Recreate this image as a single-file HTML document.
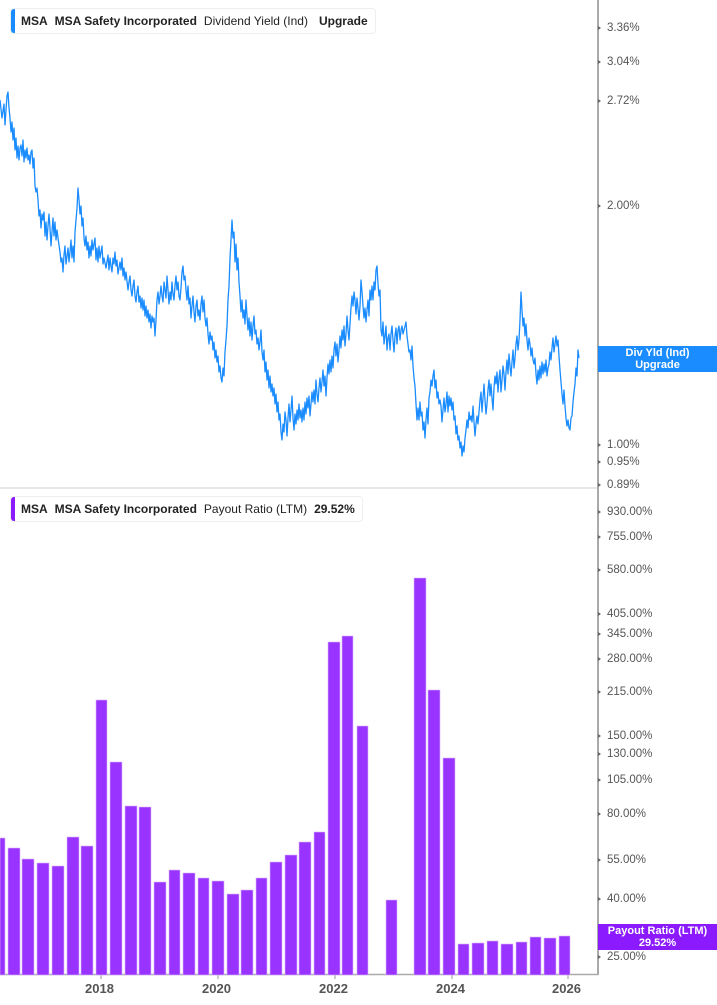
<!DOCTYPE html>
<html><head><meta charset="utf-8"><style>
html,body{margin:0;padding:0;background:#fff;}
body{width:717px;height:1005px;position:relative;overflow:hidden;font-family:"Liberation Sans",sans-serif;}
.leg{position:absolute;left:10px;height:24px;border:1px solid #eee;border-radius:4px;background:#fff;font-size:12px;color:#222;line-height:24px;white-space:nowrap;padding-left:10px;padding-right:7px;}
.leg:before{content:"";position:absolute;left:0;top:0;width:4px;height:24px;border-radius:3px 0 0 3px;background:var(--c);}
.leg b{font-weight:bold;margin-right:7px;}
.leg span{margin-right:7px;}
.ax{position:absolute;left:607px;font-size:11.5px;color:#555;line-height:12px;}
.ax:before{content:"";position:absolute;left:-9px;top:4px;border-left:3px solid #666;border-top:2px solid transparent;border-bottom:2px solid transparent;}
.tag{position:absolute;left:598px;width:119px;color:#fff;font-size:11px;font-weight:bold;text-align:center;line-height:12px;padding:1px 0;}
.yr{position:absolute;top:981px;font-size:13px;font-weight:bold;color:#555;}
</style></head><body>
<svg width="717" height="1005" style="position:absolute;left:0;top:0">
<line x1="0" y1="488" x2="598" y2="488" stroke="#ddd" stroke-width="1.5"/>
<line x1="598" y1="0" x2="598" y2="975" stroke="#aaa" stroke-width="2"/>
<line x1="0" y1="974.5" x2="598" y2="974.5" stroke="#aaa" stroke-width="1.5"/>
<g stroke="#999" stroke-width="1"><line x1="101" y1="975" x2="101" y2="979"/><line x1="218" y1="975" x2="218" y2="979"/><line x1="335" y1="975" x2="335" y2="979"/><line x1="452" y1="975" x2="452" y2="979"/><line x1="568" y1="975" x2="568" y2="979"/></g>
<g fill="#9933ff" stroke="#d9b3ff" stroke-width="0.6">
<rect x="0" y="838" width="5" height="137"/>
<rect x="8" y="848" width="12" height="127"/>
<rect x="22" y="859" width="12" height="116"/>
<rect x="37" y="863" width="12" height="112"/>
<rect x="52" y="866" width="12" height="109"/>
<rect x="67" y="837" width="12" height="138"/>
<rect x="81" y="846" width="12" height="129"/>
<rect x="96" y="700" width="11" height="275"/>
<rect x="110" y="762" width="12" height="213"/>
<rect x="125" y="806" width="12" height="169"/>
<rect x="139" y="807" width="12" height="168"/>
<rect x="154" y="882" width="12" height="93"/>
<rect x="169" y="870" width="11" height="105"/>
<rect x="183" y="873" width="12" height="102"/>
<rect x="198" y="878" width="11" height="97"/>
<rect x="212" y="881" width="12" height="94"/>
<rect x="227" y="894" width="12" height="81"/>
<rect x="241" y="890" width="12" height="85"/>
<rect x="256" y="878" width="11" height="97"/>
<rect x="270" y="862" width="12" height="113"/>
<rect x="285" y="855" width="12" height="120"/>
<rect x="299" y="842" width="12" height="133"/>
<rect x="314" y="832" width="11" height="143"/>
<rect x="328" y="642" width="12" height="333"/>
<rect x="342" y="636" width="11" height="339"/>
<rect x="357" y="726" width="11" height="249"/>
<rect x="386" y="900" width="11" height="75"/>
<rect x="414" y="578" width="12" height="397"/>
<rect x="428" y="690" width="12" height="285"/>
<rect x="443" y="758" width="12" height="217"/>
<rect x="458" y="944" width="11" height="31"/>
<rect x="472" y="943" width="12" height="32"/>
<rect x="487" y="941" width="11" height="34"/>
<rect x="501" y="944" width="12" height="31"/>
<rect x="516" y="942" width="11" height="33"/>
<rect x="530" y="937" width="11" height="38"/>
<rect x="544" y="938" width="12" height="37"/>
<rect x="559" y="936" width="11" height="39"/>
</g>
<polyline fill="none" stroke="#1a8cff" stroke-width="1.3" stroke-linejoin="round" points="
0,100 2,118 4,104 5,125 6,110 7,96 8,92 9,108 10,118 11,132 12,122 13,140 14,128 15,150 16,138 17,158 18,146 19,160 20,148 21,145 22,156 23,140 24,162 25,150 26,158 27,148 28,160 29,155 30,164 31,152 32,150 33,168 34,158 35,186 36,192 37,188 38,200 39,216 40,210 41,228 42,214 43,220 44,212 45,236 46,222 47,240 48,226 49,214 50,228 51,246 52,232 53,218 54,236 55,222 56,240 57,230 58,238 60,252 61,262 62,258 63,272 64,255 65,246 66,264 67,256 68,248 69,262 70,252 71,240 72,258 73,246 74,262 75,232 76,220 77,208 78,188 79,200 80,214 81,206 82,226 83,218 84,238 85,246 86,236 87,250 88,242 89,258 90,246 91,256 92,240 93,250 94,244 95,238 96,260 97,248 98,262 99,246 100,258 102,246 103,264 104,258 106,268 108,255 109,270 110,258 111,266 112,272 113,258 114,264 115,252 116,266 117,260 118,274 120,262 121,270 122,258 123,276 124,268 125,280 126,272 128,290 129,282 130,276 131,290 132,296 133,286 134,280 135,296 136,302 137,292 138,286 139,302 140,296 141,308 142,298 143,310 144,300 145,316 146,306 147,318 148,310 149,322 150,314 151,328 152,316 153,322 154,318 155,336 156,320 157,300 158,292 159,304 160,296 161,286 162,296 163,302 164,282 165,290 166,298 167,276 168,290 169,304 170,292 171,300 172,282 173,294 174,300 175,286 176,276 177,290 178,282 179,296 180,300 181,288 182,272 183,266 184,280 185,276 186,290 187,300 188,286 189,304 190,298 191,318 192,306 193,296 194,312 195,322 196,306 197,300 198,316 199,310 200,320 201,304 202,296 203,312 204,300 205,318 206,326 207,318 208,334 209,344 210,332 211,340 212,336 213,350 214,342 215,358 216,350 217,362 218,356 219,372 220,366 221,378 222,382 223,368 224,376 225,352 226,340 227,326 228,300 229,286 230,258 231,240 232,220 233,238 234,232 235,262 236,244 237,270 238,258 239,282 240,296 241,312 242,300 243,318 244,310 245,324 246,300 247,316 248,330 249,318 250,336 251,322 252,340 253,326 254,316 255,334 256,330 257,344 258,338 259,350 260,342 261,330 262,352 263,360 264,350 265,372 266,362 267,380 268,370 269,388 270,376 271,392 272,384 273,396 274,388 275,404 276,394 277,412 278,402 279,420 280,414 281,432 282,440 283,424 284,432 285,412 286,420 287,436 288,418 289,404 290,422 291,410 292,396 293,418 294,430 295,414 296,424 297,410 298,420 299,404 300,418 301,410 302,422 303,408 304,420 305,402 306,414 307,398 308,408 309,396 310,416 311,404 312,392 313,402 314,390 315,404 316,380 317,394 318,402 319,388 320,378 321,392 322,382 323,370 324,386 325,376 326,396 327,378 328,364 329,374 330,360 331,372 332,356 333,368 334,350 335,342 336,356 337,344 338,362 339,350 340,336 341,348 342,330 343,340 344,326 345,346 346,334 347,316 348,330 349,340 350,324 351,308 352,296 353,306 354,292 355,300 356,314 357,298 358,308 359,320 360,306 361,280 362,292 363,306 364,318 365,308 366,322 367,310 368,300 369,316 370,290 371,300 372,286 373,300 374,282 375,290 376,270 377,266 378,284 379,296 380,290 381,330 382,336 383,322 384,344 385,336 386,326 387,350 388,338 389,334 390,350 391,334 392,326 393,340 394,352 395,336 396,328 397,344 398,330 399,326 400,340 401,330 402,326 403,334 404,330 405,326 406,322 407,336 408,344 409,352 410,350 411,360 412,346 413,366 414,378 415,386 416,404 417,420 418,408 419,420 420,402 421,416 422,412 423,430 424,422 425,438 426,420 427,408 428,424 429,398 430,392 431,380 432,386 433,376 434,370 435,388 436,380 437,398 438,392 439,404 440,400 441,406 442,422 443,410 444,398 445,412 446,404 447,392 448,412 449,396 450,406 451,398 452,410 453,402 454,420 455,416 456,434 457,426 458,440 459,436 460,448 461,442 462,456 463,446 464,452 465,438 466,430 467,420 468,428 469,412 470,420 471,416 472,422 473,406 474,422 475,436 476,424 477,416 478,424 479,412 480,400 481,392 482,412 483,398 484,384 485,400 486,414 487,404 488,390 489,380 490,396 491,384 492,398 493,410 494,388 495,376 496,384 497,372 498,392 499,378 500,370 501,392 502,380 503,366 504,374 505,390 506,372 507,360 508,374 509,354 510,366 511,376 512,362 513,350 514,368 515,358 516,344 517,336 518,350 519,340 520,320 521,292 522,310 523,326 524,318 525,336 526,324 527,340 528,350 529,338 530,344 531,356 532,348 533,360 534,364 535,358 536,374 537,384 538,370 539,380 540,366 541,378 542,362 543,374 544,364 545,372 546,360 547,376 548,368 549,364 550,352 551,360 552,348 553,338 554,352 555,344 556,336 557,346 558,340 559,356 560,370 561,382 562,394 563,404 564,390 565,406 566,418 567,426 568,420 569,428 570,430 571,418 572,416 573,402 574,392 575,384 576,368 577,376 578,350 579,358"/>
</svg>
<div class="leg" style="top:8px;--c:#1a8cff"><b>MSA</b><b>MSA Safety Incorporated</b><span>Dividend Yield (Ind)</span><b style="margin-left:4px;margin-right:0">Upgrade</b></div>
<div class="leg" style="top:496px;--c:#8c1aff"><b>MSA</b><b>MSA Safety Incorporated</b><span>Payout Ratio (LTM)</span><b style="margin-right:0">29.52%</b></div>
<div class="ax" style="top:22px">3.36%</div>
<div class="ax" style="top:56px">3.04%</div>
<div class="ax" style="top:95px">2.72%</div>
<div class="ax" style="top:200px">2.00%</div>
<div class="ax" style="top:439px">1.00%</div>
<div class="ax" style="top:456px">0.95%</div>
<div class="ax" style="top:479px">0.89%</div>
<div class="ax" style="top:506px">930.00%</div>
<div class="ax" style="top:531px">755.00%</div>
<div class="ax" style="top:564px">580.00%</div>
<div class="ax" style="top:608px">405.00%</div>
<div class="ax" style="top:628px">345.00%</div>
<div class="ax" style="top:653px">280.00%</div>
<div class="ax" style="top:686px">215.00%</div>
<div class="ax" style="top:730px">150.00%</div>
<div class="ax" style="top:748px">130.00%</div>
<div class="ax" style="top:774px">105.00%</div>
<div class="ax" style="top:808px">80.00%</div>
<div class="ax" style="top:854px">55.00%</div>
<div class="ax" style="top:893px">40.00%</div>
<div class="ax" style="top:951px">25.00%</div>
<div class="tag" style="top:346px;background:#1a8cff">Div Yld (Ind)<br>Upgrade</div>
<div class="tag" style="top:924px;background:#8c1aff">Payout Ratio (LTM)<br>29.52%</div>
<div class="yr" style="left:85px">2018</div>
<div class="yr" style="left:202px">2020</div>
<div class="yr" style="left:319px">2022</div>
<div class="yr" style="left:436px">2024</div>
<div class="yr" style="left:552px">2026</div>
</body></html>
